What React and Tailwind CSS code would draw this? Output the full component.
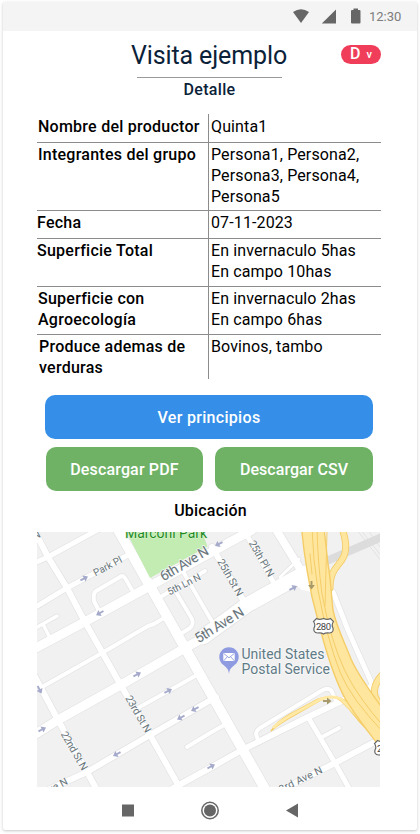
import React from "react";

const rows = [
  { label: ["Nombre del productor"], value: ["Quinta1"], box: "h-[28px] pt-[2px] pl-[1px]", valueBox: "pt-[2px]" },
  { label: ["Integrantes del grupo"], value: ["Persona1, Persona2,", "Persona3, Persona4,", "Persona5"], box: "h-[67px] pt-[1px] pl-[1px]", valueBox: "pt-[1px]" },
  { label: ["Fecha"], value: ["07-11-2023"], box: "h-[27px] pt-[1px]", valueBox: "pt-[1px]" },
  { label: ["Superficie Total"], value: ["En invernaculo 5has", "En campo 10has"], box: "h-[47px] pt-[1px]", valueBox: "pt-[1px]" },
  { label: ["Superficie con", "Agroecología"], value: ["En invernaculo 2has", "En campo 6has"], box: "h-[47px] pt-[1px] pl-[1px]", valueBox: "pt-[1px]" },
  { label: ["Produce ademas de", "verduras"], value: ["Bovinos, tambo"], box: "h-[44px] pt-[1px] pl-[2px]", valueBox: "pt-[1px]" },
];

const roads = [
  [10, "M117 528L265 789"],
  [9, "M252 530L210 553L150 586L85 621.7L34 649"],
  [6, "M33 528L48 557L67 588L85 622L102 652L120.7 685L150 735L181 790"],
  [5, "M34 563L48 557L101 528"],
  [5, "M34 608L67 588L130 554"],
  [4, "M132 590L125 578Q123 575 120 577L96 591Q93 593 94 601L99 611"],
  [3.5, "M57 616L34 629M43 624L50 638"],
  [4, "M164 618L154 624L148 626L102 653L42 687"],
  [9, "M205 637L185 648L120.7 685L58 720L34 735"],
  [15, "M203 637L247 605L305 573"],
  [6, "M34 675L58 720L87 772L97 790"],
  [4, "M197 675L138 708"],
  [6, "M216 697L150 735L87 772L50 789"],
  [4, "M187 747L210 733L226 724"],
  [6, "M172 789L210 768L242 750L308 717L348 698L375 685"],
  [5, "M308 717L335 763L350 790"],
  [4, "M322 737L339 728"],
  [6, "M280 791L335 763L382 738"],
  [4, "M258 740L256 734Q256 731 260 728L321 691Q329 686 332 692L337 703"],
  [5, "M333 592L348 630L359 655L373 686"],
  [5, "M245 532L275 585"],
  [6, "M212 547L243 600"],
  [8, "M275 528L302 572"],
  [3, "M299 559L280 577"],
  [4, "M181 568L214 625"],
  [4, "M162 596L205 571"],
  [4, "M176 592L192 619Q194 624 190 628L182 633"],
];

const arrows = [
  [84, 578.5, -27], [100, 613, 150], [219, 544, 152], [293, 588, -27], [137, 674.5, -28],
  [168, 691, -28], [195, 709, 152], [181, 717.5, 152], [117, 754, 152], [42, 729.5, -28],
  [39.5, 689.5, 62], [211, 766.5, -28],
];

function Arrow({ x, y, angle, color = "#a5aacb" }) {
  return (
    <g transform={`translate(${x} ${y}) rotate(${angle})`} stroke={color} fill={color}>
      <path d="M-4 0H1" strokeWidth="1.9" />
      <path d="M0 -3.4L4.5 0L0 3.4Z" stroke="none" />
    </g>
  );
}

function Shield({ x, y }) {
  return (
    <g transform={`translate(${x} ${y})`}>
      <path
        d="M-7 -7.5Q-4 -5.8 0 -7.5Q4 -5.8 7 -7.5L10 -4.5Q7.6 -1 9.5 2Q10.5 6.5 6 7Q2 6.5 0 8Q-2 6.5 -6 7Q-10.5 6.5 -9.5 2Q-7.6 -1 -10 -4.5Z"
        fill="#fff"
        stroke="#666"
        strokeWidth="1.2"
      />
      <text x="0" y="3.6" fontSize="9.5" textLength="15" textAnchor="middle" fill="#444">280</text>
    </g>
  );
}

function StreetLabel({ x, y, angle, size, length, children }) {
  return (
    <text
      transform={`translate(${x} ${y}) rotate(${angle})`}
      fontSize={size}
      textLength={length}
      fill="#68757b"
      stroke="#fafafa"
      strokeWidth="1.4"
      paintOrder="stroke"
    >
      {children}
    </text>
  );
}

function StreetMap() {
  return (
    <svg viewBox="37 532 343 255" className="block h-[255px] w-[343px] bg-[#f1f1f1] font-[Roboto,sans-serif]">
      <path d="M322 563L382 537" stroke="#dcdcdc" strokeWidth="8" />
      <path d="M357 530L382 562M361 530L382 557M368 530L382 550" stroke="#dedede" strokeWidth="0.8" />
      <g fill="none" stroke="#e3e3e3" strokeLinecap="round" strokeLinejoin="round">
        {roads.map(([w, d]) => <path key={d} d={d} strokeWidth={w + 1.4} />)}
      </g>
      <g fill="none" stroke="#fff" strokeLinecap="round" strokeLinejoin="round">
        {roads.map(([w, d]) => <path key={d} d={d} strokeWidth={w} />)}
      </g>
      <path d="M292 576L308 568L312 592L302 590L294 583Z" fill="#fff" />
      <path d="M126.5 532L150 578L207.5 546.5L202 532Z" fill="#c3ecb2" />

      <g strokeLinejoin="round" strokeLinecap="round" fill="none">
        <path d="M341.5 526C346 540 347 548 344 556C340 566 330 568 330 588" stroke="#f4cd68" strokeWidth="7" />
        <path d="M341.5 526C346 540 347 548 344 556C340 566 330 568 330 588" stroke="#ffe69e" strokeWidth="5.2" />
        <path d="M271 731Q280 723 295 715L321 700Q332 694 341 701Q350 709 358 720L379 743L382 738L359 712Q347 698 336 697.5Q326 696 318 699L290 714Q276 722 271 731Z" fill="#ffe9a5" stroke="#f4cd68" strokeWidth="1.2" />
        <path d="M274 727Q282 720 295 713L320 699.5Q332 695 341 699L356 714" stroke="#ffe9a5" strokeWidth="3" />
        <path d="M385 672Q372 684 375 696L384 716" stroke="#f4cd68" strokeWidth="7" />
        <path d="M385 672Q372 684 375 696L384 716" stroke="#ffe69e" strokeWidth="5.2" />
        <path d="M301.5 528L304 550L307 570L312 597L321 632C327 654 335 681 346 700C356 716 369 733 383 751L383 709C369 690 357 673 351 659C344 641 336 626 333 610C331 594 331 580 328 564L324 528Z" fill="#ffe69e" stroke="#f4cd68" strokeWidth="1.4" />
        <path d="M312 528Q313 560 318 590Q327 639 340 672Q351 699 384 733M317 528Q318 565 322 594Q331 642 345 671Q357 696 384 727M310 554L312 574M327 532L325 606" stroke="#f4cd68" strokeWidth="1" />
      </g>

      {arrows.map(([x, y, a]) => <Arrow key={`${x}-${y}`} x={x} y={y} angle={a} />)}
      <Arrow x={311.5} y={585} angle={90} color="#a69868" />
      <Arrow x={327} y={701} angle={0} color="#a69868" />
      <Shield x={323.5} y={626} />
      <Shield x={384.5} y={748} />

      <text x="125" y="538" fontSize="14" textLength="82" fill="#1f8b24" stroke="#dff3d6" strokeWidth="1" paintOrder="stroke">Marconi Park</text>
      <StreetLabel x={95.5} y={576.5} angle={-28} size={10} length={31}>Park Pl</StreetLabel>
      <StreetLabel x={163.5} y={581.5} angle={-31} size={14} length={54}>6th Ave N</StreetLabel>
      <StreetLabel x={169.5} y={595.5} angle={-27} size={10} length={36}>5th Ln N</StreetLabel>
      <StreetLabel x={198.5} y={643.5} angle={-32} size={14} length={55}>5th Ave N</StreetLabel>
      <StreetLabel x={217} y={561.5} angle={60} size={10.5} length={41}>25th St N</StreetLabel>
      <StreetLabel x={248.5} y={543} angle={60} size={10.5} length={40}>25th Pl N</StreetLabel>
      <StreetLabel x={125} y={698} angle={60} size={10.5} length={41}>23rd St N</StreetLabel>
      <StreetLabel x={60.5} y={734} angle={60} size={10.5} length={43}>22nd St N</StreetLabel>
      <StreetLabel x={35} y={540} angle={-28} size={10}>N</StreetLabel>
      <StreetLabel x={44.5} y={796.5} angle={-28} size={10.5}>Ave N</StreetLabel>
      <StreetLabel x={281} y={793} angle={-26} size={10.5} length={47}>3rd Ave N</StreetLabel>

      <path d="M229 674C228.5 669 226.5 667.5 223.5 665A9.7 9.7 0 1 1 234.5 665C231.5 667.5 229.5 669 229 674Z" fill="#8f9be0" />
      <rect x="223.3" y="653" width="11.4" height="8" fill="#fff" />
      <path d="M223.5 653.3L229 657.8L234.5 653.3M223.5 661L227.3 656.8M234.5 661L230.7 656.8" fill="none" stroke="#8f9be0" strokeWidth="0.9" />
      <g fontSize="14" fill="#607a86" stroke="#fafafa" strokeWidth="1.5" paintOrder="stroke">
        <text x="241.5" y="659" textLength="83">United States</text>
        <text x="241.5" y="674" textLength="88.5">Postal Service</text>
      </g>
    </svg>
  );
}

function StatusBar() {
  return (
    <div className="flex h-[29px] items-center justify-end bg-[#f4f4f4] pr-[16px]">
      <svg viewBox="0 0 76 18" className="h-[18px] w-[76px]" fill="#666">
        <path d="M0 4Q8 -1.5 16 4L8 15Z" />
        <path d="M43 1.5V15.5H28.8Z" />
        <path d="M60.5 0.5H65V2H66.5Q67.5 2 67.5 3V14.5Q67.5 15.5 66.5 15.5H59Q58 15.5 58 14.5V3Q58 2 59 2H60.5Z" />
      </svg>
      <span className="w-[32px] whitespace-nowrap font-[Roboto,sans-serif] text-[13px] leading-none text-[#7d7d7d]">12:30</span>
    </div>
  );
}

export default function App() {
  return (
    <div className="h-[834px] w-[420px] overflow-hidden bg-[#fefefe] px-[3px] pt-[2px] font-[Roboto,sans-serif] text-[16px] text-black">
      <div className="flex h-[828px] flex-col rounded-[2px] bg-white shadow-[0_1px_3px_rgba(0,0,0,0.22)]">
        <StatusBar />
        <header className="grid h-[46px] grid-cols-[128px_156px_1fr] items-center">
          <h1 className="col-start-2 whitespace-nowrap pt-[3px] text-center text-[25px] tracking-[-0.12px] text-[#0b2239]">Visita ejemplo</h1>
          <button className="ml-[54px] flex h-[19px] w-[40px] items-center justify-center gap-[6px] rounded-full bg-[#f03e5a] text-white">
            <span className="text-[16px] font-medium leading-none">D</span>
            <span className="text-[11px] font-medium leading-none">v</span>
          </button>
        </header>
        <h2 className="ml-[134px] h-[37px] w-[145px] border-t border-[#9a9a9a] text-center font-medium leading-[23px] tracking-[0.3px] text-[#0b2239]">Detalle</h2>

        <div className="ml-[34px] w-[344px] divide-y divide-[#8c8c8c]">
          {rows.map((row) => (
            <div key={row.label[0]} className="grid grid-cols-[171px_1fr] leading-[21px]">
              <div className={`whitespace-nowrap font-medium tracking-[0.25px] ${row.box}`}>
                {row.label.map((t) => <div key={t}>{t}</div>)}
              </div>
              <div className={`whitespace-nowrap border-l border-[#8c8c8c] pl-[2px] tracking-[0.12px] ${row.valueBox}`}>
                {row.value.map((t) => <div key={t}>{t}</div>)}
              </div>
            </div>
          ))}
        </div>

        <div className="ml-[42px] mt-[16px] grid w-[328px] grid-cols-[158px_158px] gap-x-[12px] gap-y-[8px] font-medium text-white">
          <button className="col-span-2 h-[44px] rounded-[10px] bg-[#358fe8] pt-[2px] tracking-[0.3px]">Ver principios</button>
          <button className="ml-px h-[44px] rounded-[10px] bg-[#6fb266] pt-[2px] tracking-[0.15px]">Descargar PDF</button>
          <button className="h-[44px] rounded-[10px] bg-[#6fb266] pt-[2px] tracking-[0.05px]">Descargar CSV</button>
        </div>

        <h3 className="ml-[34px] flex h-[41px] w-[347px] items-center justify-center pb-[2px] font-medium tracking-[0.2px]">Ubicación</h3>
        <div className="ml-[34px]"><StreetMap /></div>

        <nav className="flex h-[43px] items-center justify-center pt-[4px]">
          <svg viewBox="0 0 178 20" className="h-[20px] w-[178px]" fill="#666">
            <rect x="1" y="3.5" width="12" height="12" />
            <circle cx="89" cy="9.5" r="8.2" fill="none" stroke="#666" strokeWidth="1.5" />
            <circle cx="89" cy="9.5" r="6" />
            <path d="M165 9.5L177 2.5V16.5Z" />
          </svg>
        </nav>
      </div>
    </div>
  );
}
